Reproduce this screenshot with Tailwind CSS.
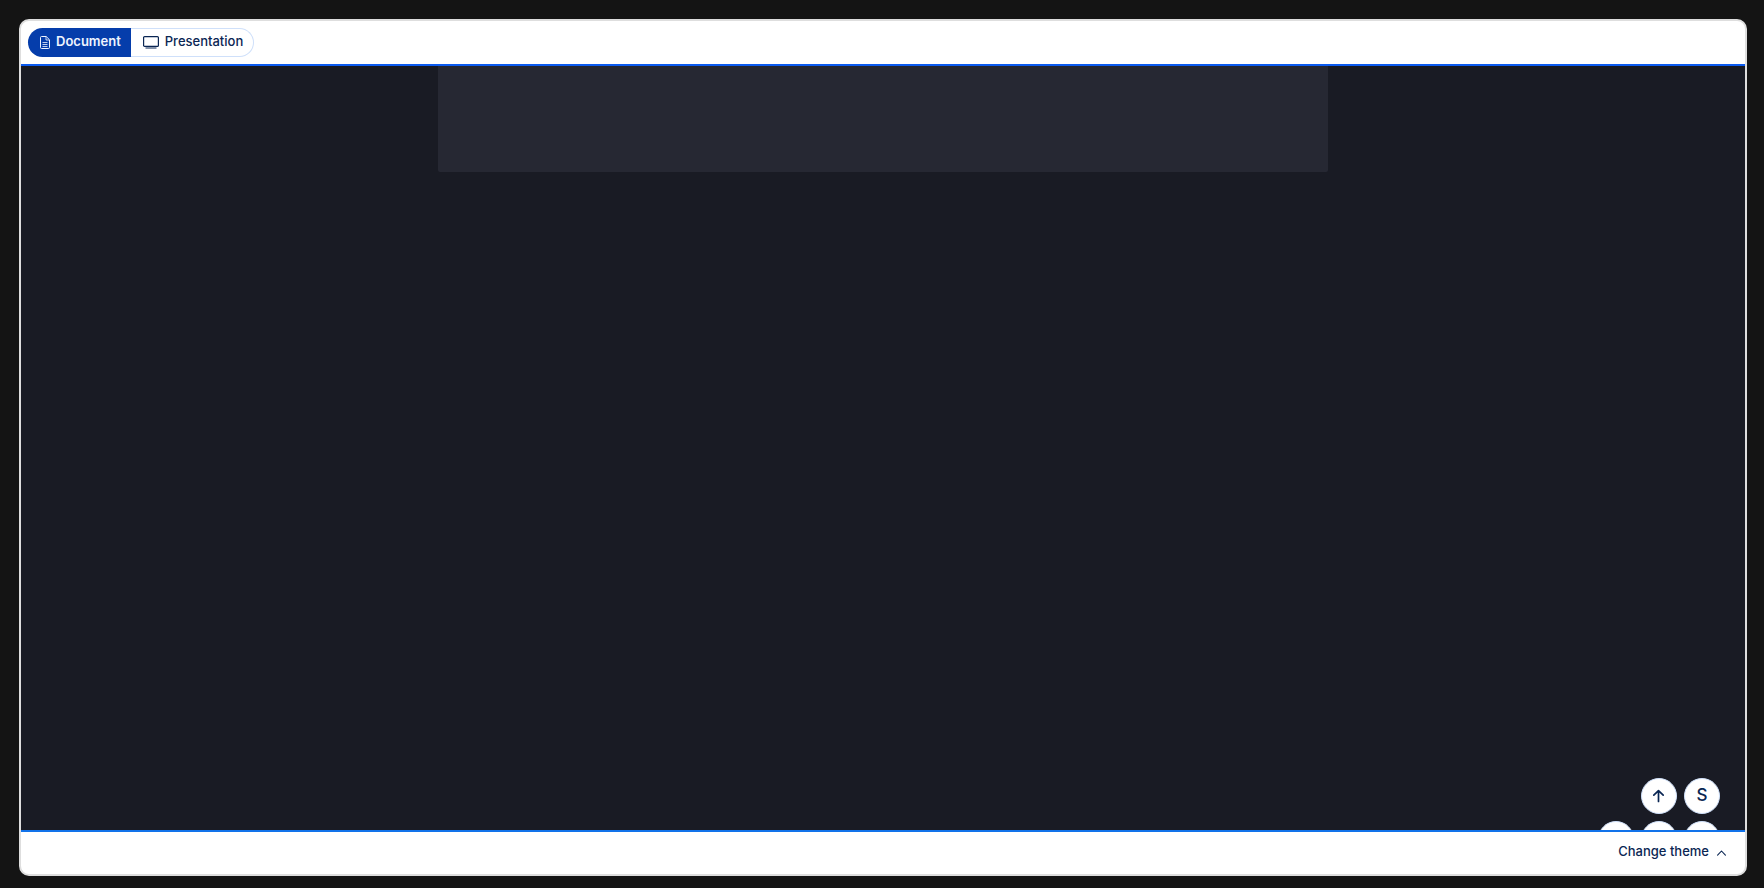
<!DOCTYPE html>
<html lang="en">
<head>
  <meta charset="UTF-8" />
  <meta name="viewport" content="width=device-width, initial-scale=1.0" />
  <title>Document preview</title>
  <script src="https://cdn.jsdelivr.net/npm/@tailwindcss/browser@4"></script>
</head>
<body class="h-screen overflow-hidden bg-[#141414] pt-[19px] pr-[17px] pb-3 pl-[19px] font-['Inter',sans-serif] text-[13px] text-[#0a2653]">
  <div class="flex h-full flex-col overflow-hidden rounded-[10px] border-2 border-[#dedede] bg-white">

    <header class="flex border-b-2 border-[#0b5bf0] px-[7px] py-[7px]">
      <div class="flex h-[29px]">
        <button type="button" class="flex items-center gap-[6px] rounded-l-full bg-[#053dab] pr-[10px] pl-3 font-semibold text-[#eef4ff]">
          <svg class="h-[13px] w-[10px]" viewBox="0 0 10 13" fill="none" stroke="currentColor" stroke-linejoin="round">
            <path d="M1.5.5h4.7l3.3 3.3v7.7a1 1 0 0 1-1 1h-7a1 1 0 0 1-1-1v-10a1 1 0 0 1 1-1z" />
            <path d="M6 .7V4h3.3M2.5 6.5h5M2.5 8.5h5M2.5 10.5h5" stroke-width=".8" />
          </svg>
          <span class="pb-[2px]">Document</span>
        </button>
        <button type="button" class="flex items-center gap-[6px] rounded-r-full border border-l-0 border-[#cfe0fa] pr-[10px] pl-3 font-medium">
          <svg class="h-[13px] w-4" viewBox="0 0 16 13" fill="none" stroke="currentColor">
            <rect x=".6" y=".6" width="14.8" height="9.8" rx="1" stroke-width="1.2" />
            <path d="M2.5 12h11" stroke-width="2" opacity=".5" />
          </svg>
          <span class="pb-[2px]">Presentation</span>
        </button>
      </div>
    </header>

    <main class="relative min-h-0 flex-1 overflow-hidden bg-[#191b24]">
      <div class="mx-auto h-[106px] w-full max-w-[890px] rounded-b-xs bg-[#262833]"></div>

      <!-- floating controls, the second row runs under the footer -->
      <div class="absolute right-[25px] -bottom-[27px] grid grid-cols-3 gap-[7px]">
        <button type="button" aria-label="Scroll to top" class="col-start-2 flex size-9 items-center justify-center rounded-full border border-[#cfe0fa] bg-white">
          <svg class="size-4" viewBox="0 0 16 16" fill="none" stroke="currentColor" stroke-width="1.7" stroke-linecap="round" stroke-linejoin="round">
            <path d="M7.5 13.5V2.8M2.8 7.2l4.7-4.6 4.7 4.6" />
          </svg>
        </button>
        <button type="button" class="flex size-9 items-center justify-center rounded-full border border-[#cfe0fa] bg-white text-[17px] font-medium">S</button>
        <button type="button" aria-label="Previous" class="size-9 rounded-full border border-[#cfe0fa] bg-white"></button>
        <button type="button" aria-label="Scroll down" class="size-9 rounded-full border border-[#cfe0fa] bg-white"></button>
        <button type="button" aria-label="Next" class="size-9 rounded-full border border-[#cfe0fa] bg-white"></button>
      </div>
    </main>

    <footer class="flex h-11 shrink-0 items-center justify-end border-t-2 border-[#1273ea] pr-[19px]">
      <button type="button" class="flex items-center gap-2 pb-[2px] font-medium">
        Change theme
        <svg class="mt-[2px] h-[6px] w-[9px]" viewBox="0 0 9 6" fill="none" stroke="currentColor" stroke-width="1.1" stroke-linecap="round" stroke-linejoin="round">
          <path d="M.6 5.2 4.5 1l3.9 4.2" />
        </svg>
      </button>
    </footer>
  </div>
</body>
</html>
